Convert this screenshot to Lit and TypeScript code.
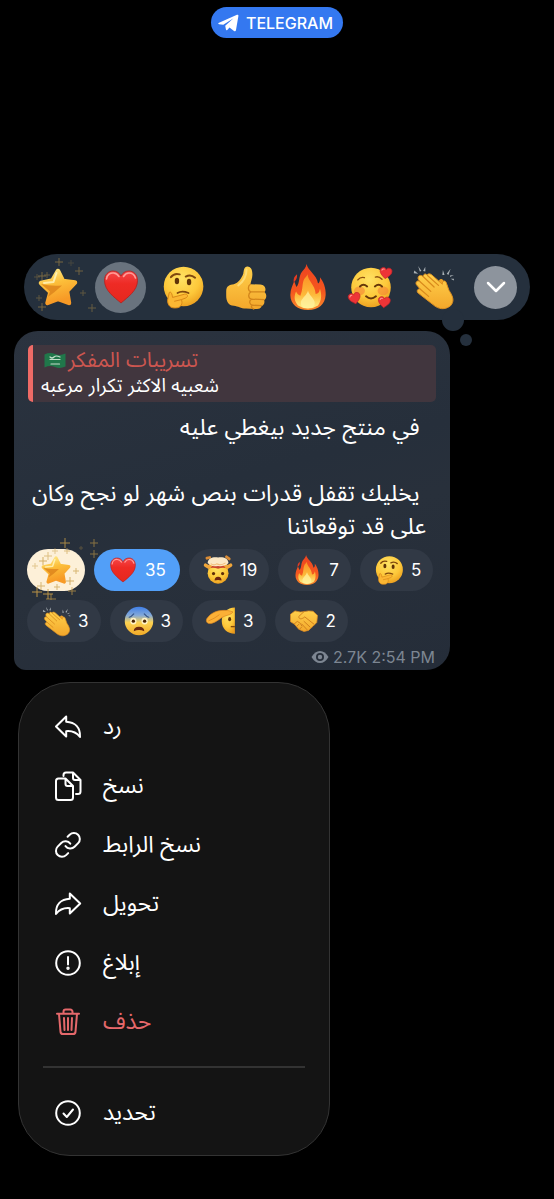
import { LitElement, html, svg, css, nothing } from "lit";
import type { TemplateResult } from "lit";
import { customElement } from "lit/decorators.js";

type Art = TemplateResult;

/* Shared gradients used by all the reaction drawings. */
const gradients = svg`
  <defs>
    <radialGradient id="face" cx="45%" cy="30%" r="75%">
      <stop offset="0" stop-color="#ffe263" /><stop offset="0.6" stop-color="#fdc83a" /><stop offset="1" stop-color="#ea9a1c" />
    </radialGradient>
    <linearGradient id="skin" x1="0" y1="0" x2="0" y2="1">
      <stop offset="0" stop-color="#ffd04b" /><stop offset="1" stop-color="#f3a72b" />
    </linearGradient>
    <linearGradient id="star" x1="0" y1="0" x2="0.3" y2="1">
      <stop offset="0" stop-color="#ffec8c" /><stop offset="0.45" stop-color="#fcbf3a" /><stop offset="1" stop-color="#f79a26" />
    </linearGradient>
    <linearGradient id="heart" x1="0" y1="0" x2="0" y2="1">
      <stop offset="0" stop-color="#f5474a" /><stop offset="0.4" stop-color="#ee2b25" /><stop offset="1" stop-color="#e5281d" />
    </linearGradient>
    <linearGradient id="flame" x1="0" y1="0" x2="0" y2="1">
      <stop offset="0" stop-color="#ee4320" /><stop offset="0.6" stop-color="#f4571f" /><stop offset="1" stop-color="#f98a2b" />
    </linearGradient>
    <linearGradient id="ember" x1="0" y1="0" x2="0" y2="1">
      <stop offset="0" stop-color="#fb9124" /><stop offset="0.6" stop-color="#fdb93a" /><stop offset="1" stop-color="#fff08a" />
    </linearGradient>
    <linearGradient id="fear" x1="0" y1="0" x2="0" y2="1">
      <stop offset="0" stop-color="#3f7fe8" /><stop offset="0.3" stop-color="#83a9d9" /><stop offset="0.55" stop-color="#fbd253" /><stop offset="1" stop-color="#f2aa27" />
    </linearGradient>
  </defs>`;

const star = svg`
  <path d="M20 4 L25 14 L37 15.500 L29 24 L31 36 L20 32 L9.500 36 L12.500 25 L3 16 L14.500 13.500 Z" fill="url(#star)" stroke="url(#star)" stroke-width="4.500" stroke-linejoin="round" />
  <path d="M3 17 Q13 19.500 24 18.500 Q17 25 10 30 L12 24.500 Z" fill="#dd851c" opacity="0.85" />
  <path d="M18.500 6 L15.500 15 L6 16" fill="none" stroke="#fff6c0" stroke-width="2" stroke-linecap="round" stroke-linejoin="round" opacity="0.8" />`;

const heart = svg`
  <path d="M20 36 C13 30 3.500 23.500 3.500 13.500 C3.500 7.500 7.500 4 12 4 C15.800 4 18.500 6 20 9 C21.500 6 24.200 4 28 4 C32.500 4 36.500 7.500 36.500 13.500 C36.500 23.500 27 30 20 36 Z" fill="url(#heart)" stroke="#b51f1c" stroke-width="0.800" />
  <path d="M5.500 12 C6 7.500 9.500 5.700 12.500 6 C15 6.200 17 8 18 9.500" fill="none" stroke="#ff9d98" stroke-width="1.600" stroke-linecap="round" />
  <path d="M22.500 9.500 C24 7 26 6 28 6 C31 6 33.500 8 34.500 11" fill="none" stroke="#ff9d98" stroke-width="1.600" stroke-linecap="round" />`;

const thinking = svg`
  <circle cx="20.500" cy="19.500" r="18" fill="url(#face)" />
  <ellipse cx="14.500" cy="14.500" rx="2" ry="3" fill="#5f3208" /><ellipse cx="25.500" cy="15.500" rx="2" ry="3" fill="#5f3208" />
  <path d="M9 11 Q12 7 17 8.500 M22.500 10.500 Q27 8 31 11.500" fill="none" stroke="#80480e" stroke-width="1.800" stroke-linecap="round" />
  <path d="M15 25.500 Q19 23 25 25.500" fill="none" stroke="#80480e" stroke-width="1.600" stroke-linecap="round" />
  <path d="M7.500 25 C9 24 10 25.500 10.500 29.500 L21.500 26.500 C24.500 26 25 29 22.500 30 L18.500 31.500 C20 34.500 18.500 39 13.500 39 C8.500 39.500 6 36.500 6 32 Z" fill="#fbb733" stroke="#d98818" stroke-width="0.900" stroke-linejoin="round" />
  <path d="M12 33 L18.500 31.500" stroke="#d98818" stroke-width="0.900" />`;

const thumb = svg`
  <path d="M2 24 C2 19 5 18 9 17.500 C13 16.500 16 12 17.500 8 C18 5.500 18 2 20.500 1.500 C24 1 26 4 25.800 9 C25.700 12 24.500 14.500 24 17.500 L33 17.800 C37.500 18 38.800 22.500 36.800 24.500 C39.500 27 38.500 31 36.500 32 C37.500 35 35.500 37 34 37.500 C33.500 40 31 40 28 40 L20 39.500 C15 39.500 13 37.500 9 37 C4 37 2 33 2 28 Z" fill="url(#skin)" />
  <path d="M24 17.500 C21.500 19 21.500 23.500 24.500 24.500 C21.500 26 22 30.500 25 31 C22.500 32.500 23 36 26 36.500 C24 37.500 25 39.500 27 40 M24.500 24.500 L36.800 24.500 M25 31 L36.500 31.500 M26 36.500 L34 37" fill="none" stroke="#d2851b" stroke-width="1.200" stroke-linecap="round" />
  <path d="M20.500 4 C20.500 10 17.500 15 13 18.500" fill="none" stroke="#ffe283" stroke-width="1.800" stroke-linecap="round" opacity="0.8" />`;

const fire = svg`
  <g transform="translate(3.400 0) scale(0.830 1)">
  <path d="M18.500 0 C20 6 29 9 30.500 17 C32 16.500 33 14 32.500 11.500 C36 15 39 21 38.500 27 C38 35 31 40 20 40 C9 40 1.500 35 1.500 27 C1.500 22 4 18.500 5.500 15 C6.500 17 7 18.500 8 20 C11.500 17 10 11 13.500 7 C16 4.500 18 3 18.500 0 Z" fill="url(#flame)" />
  <path d="M8.500 9 C5.500 11 4.500 13 5 16 C7 14.500 9 12.500 8.500 9 Z" fill="#e93a20" />
  <path d="M19.500 9 C20 15 27.500 18 28 26 C31 26 32 24 32.500 21.500 C34.500 26 34.500 32 30.500 36 Q20 41.500 9.500 36 C5 32 5.500 27.500 7.500 24 C8.500 26 10 27 12 27.500 C15 22 13.500 17 16 13 C17.500 11.500 19 10.500 19.500 9 Z" fill="url(#ember)" />
  <path d="M20 23 C21 27 25.500 29 27 33 Q28 38 20 38.500 Q12 38.500 12.500 33 C14 29 19 27 20 23 Z" fill="#fff3a0" opacity="0.75" />
  </g>`;

const miniHeart = (x: number, y: number, turn: number) => svg`
  <g transform="translate(${x} ${y}) rotate(${turn}) scale(0.300)">
    <path d="M0 18 C-7 12 -18 5 -18 -5 C-18 -12 -13 -15 -8 -15 C-4 -15 -1 -13 0 -9 C1 -13 4 -15 8 -15 C13 -15 18 -12 18 -5 C18 5 7 12 0 18 Z" fill="#ee3437" stroke="#c2222a" stroke-width="2" />
    <path d="M-13 -6 Q-11 -11 -6 -10" fill="none" stroke="#ff9b95" stroke-width="3" stroke-linecap="round" />
  </g>`;

const adoring = svg`
  <circle cx="20" cy="20.500" r="18" fill="url(#face)" />
  <ellipse cx="9.500" cy="23.500" rx="5" ry="4" fill="#f47d35" opacity="0.55" /><ellipse cx="31" cy="23.500" rx="5" ry="4" fill="#f47d35" opacity="0.55" />
  <path d="M10 19.500 Q13 16.500 16.500 19.500 M23.500 19.500 Q27 16.500 30 19.500" fill="none" stroke="#66380a" stroke-width="1.800" stroke-linecap="round" />
  <path d="M8 13.500 Q10.500 10.500 14 11.500 M24 11 Q27 10 30 13" fill="none" stroke="#8d5010" stroke-width="1.300" stroke-linecap="round" />
  <path d="M15.500 28.500 Q20 32.500 24.500 28.500" fill="none" stroke="#66380a" stroke-width="1.800" stroke-linecap="round" />
  ${miniHeart(33.5, 7, 8)}${miniHeart(5, 30, -14)}${miniHeart(32, 33.5, 6)}`;

const clap = svg`
  <path d="M25 16.500 C25 12 28 12 29.500 14 L31.500 22 Z" fill="#eda127" />
  <path d="M14.500 9 C16.500 7 18.500 8.500 20 10 L28.500 17.500 C28 14.500 31 13.500 32 16 L34.500 23 C38.500 29 39.500 33 36 37 C31 41 25 40.500 20 36 L6.500 25.500 C4.500 23.500 6.500 21 8.500 22 L5 18 C3.500 15.500 6 13.500 8 15 L6.500 12.500 C6 9.500 9 8.500 11 10.500 C11.500 8 13 7.500 14.500 9 Z" fill="url(#skin)" stroke="#dc8f20" stroke-width="0.900" stroke-linejoin="round" />
  <path d="M8 15 L18 24 M8.500 22 L16 28.500 M11 10.500 L21 20 M15 9.500 L25 18.500" fill="none" stroke="#d98a1c" stroke-width="1.100" stroke-linecap="round" />
  <path d="M3 5 L6.500 8 L2.500 7.500 Z M6.500 1 L9.500 5.500 L8 6 Z M13 1.500 L13 6 L11 5.500 Z M29 4.500 L30.500 9 L28.500 9 Z M36 3.500 L34 9 L32.500 8 Z M39 9 L35.500 11 L35.500 9.500 Z M39 14 L36 12.500 L39 12.500 Z" fill="#a9b0b5" />`;

const exploding = svg`
  <g transform="translate(1.500 1.500) scale(0.930)">
  <circle cx="20" cy="24.500" r="15" fill="url(#face)" />
  <path d="M6 18 Q10 12 20 12.500 Q30 12 34 18 Q27 15.500 20 18 Q12 15.500 6 18 Z" fill="#c9452d" />
  <path d="M2 13 L7 16 L10 12 M38 13 L33 16 L30 12" fill="none" stroke="#f0a63a" stroke-width="5" stroke-linejoin="round" stroke-linecap="round" />
  <path d="M4 3 L8 2 M32 1 L36 4" fill="none" stroke="#d98b35" stroke-width="4" stroke-linecap="round" />
  <path d="M5 10 C6 3 12 1 20 2 C28 1 34 3 35 10 C31 14 26 15 20 14 C13 15.500 9 14 5 10 Z" fill="#fbe7c4" />
  <path d="M10 11 Q14 14 18 11 Q23 14 30 10" fill="none" stroke="#f0bd78" stroke-width="1.500" stroke-linecap="round" />
  <circle cx="13.500" cy="25" r="2.300" fill="#5f2b08" /><circle cx="26.500" cy="25" r="2.300" fill="#5f2b08" />
  <path d="M15 35 Q15 29.500 20 29.500 Q25 29.500 25 35 Q20 33.500 15 35 Z" fill="#6d2410" />
  </g>`;

const fearful = svg`
  <circle cx="20" cy="20" r="19" fill="url(#fear)" />
  <path d="M7 15 Q10 14 13 10.500 M27 10.500 Q30 14 33 15" fill="none" stroke="#34548a" stroke-width="1.600" stroke-linecap="round" />
  <ellipse cx="12.500" cy="20" rx="4.200" ry="4.500" fill="#fff3c8" /><ellipse cx="27.500" cy="20" rx="4.200" ry="4.500" fill="#fff3c8" />
  <circle cx="12.500" cy="20.200" r="2.200" fill="#4c2606" /><circle cx="27.500" cy="20.200" r="2.200" fill="#4c2606" />
  <path d="M13 33.500 Q13 27.500 20 27.500 Q27 27.500 27 33.500 Q20 30.500 13 33.500 Z" fill="#6d2a10" />`;

const salute = svg`
  <path d="M38.500 2 C28 2 21 10 21 20 C21 30 28 37 38.500 37 Z" fill="url(#face)" />
  <path d="M1 17 C6 10 12 7 20 6 C27 5.500 32 6 36 8 C33 12 29 12 25 13.500 C20 15 15 21 8 23 C3 24.500 -1 22 1 17 Z" fill="#fbb036" stroke="#d98420" stroke-width="0.900" />
  <path d="M3 20 Q11 17 18 11.500" fill="none" stroke="#d98420" stroke-width="1" />
  <ellipse cx="31.500" cy="17.500" rx="2" ry="2.800" fill="#5f3208" />
  <path d="M33 27.500 H38.500" stroke="#80480e" stroke-width="1.800" />`;

const handshake = svg`
  <path d="M2 11 L8 6.500 L15 8 L20 7.500 L26 6.500 L32 7 L38 12.500 L37 22 L32 27 L26 32.500 L20 34 L13 31 L7 24 L2 21 Z" fill="url(#skin)" stroke="#d98a24" stroke-width="1" stroke-linejoin="round" />
  <path d="M20 7.500 L13 14 C13 18 17 18 21 14.500 L33 24 M28 28 L20 20.500 M24 31.500 L17 24 M7 24 L11 20.500 L15 23 L17 26.500 M10 27.500 L13 24.500 M14 31 L17 28" fill="none" stroke="#cf7f1e" stroke-width="1.300" stroke-linecap="round" stroke-linejoin="round" />`;

const sparkle = (x: number, y: number, r: number, o: number) => svg`
  <path d="M${x - r} ${y}H${x + r}M${x} ${y - r}V${y + r}" stroke="#c99e48" stroke-width="1" opacity=${o} />`;

const barSparkles = [
  [34, 5, 4, 0.5], [17, 19, 4, 0.5], [22, 18, 3, 0.4], [54, 14, 4, 0.45], [12, 20, 3, 0.3],
  [17, 50, 4, 0.5], [14, 41, 3, 0.35], [58, 36, 3, 0.35], [67, 51, 4, 0.4], [46, 6, 3, 0.2],
];
const chipSparkles = [
  [38, 4, 5, 0.8], [67, 4, 4, 0.6], [67, 15, 4, 0.6], [16, 22, 4, 0.8], [21, 17, 4, 0.6],
  [28, 12, 3, 0.5], [10, 53, 5, 0.9], [21, 55, 5, 0.9], [24, 60, 5, 0.7], [39, 67, 5, 0.5],
  [45, 52, 4, 0.7], [43, 42, 4, 0.8], [49, 32, 3, 0.7], [8, 27, 3, 0.5], [14, 47, 4, 0.7],
  [40, 12, 3, 0.6], [54, 9, 2, 0.3], [30, 48, 3, 0.7],
];

const emoji = (art: Art) => html`<svg class="emoji" viewBox="0 0 40 40" aria-hidden="true">${art}</svg>`;

const quick: { label: string; art: Art; kind?: string; stars?: boolean }[] = [
  { label: "نجمة", art: star, kind: "small", stars: true },
  { label: "قلب", art: heart, kind: "small on" },
  { label: "تفكير", art: thinking },
  { label: "إعجاب", art: thumb },
  { label: "نار", art: fire, kind: "large" },
  { label: "حب", art: adoring },
  { label: "تصفيق", art: clap },
];

const chips: { label: string; art: Art; count?: number; kind?: string }[] = [
  { label: "نجمة", art: star, kind: "paid" },
  { label: "قلب", art: heart, count: 35, kind: "mine" },
  { label: "ذهول", art: exploding, count: 19 },
  { label: "نار", art: fire, count: 7 },
  { label: "تفكير", art: thinking, count: 5 },
  { label: "تصفيق", art: clap, count: 3 },
  { label: "خوف", art: fearful, count: 3 },
  { label: "تحية", art: salute, count: 3 },
  { label: "مصافحة", art: handshake, count: 2 },
];

const menu: { text: string; art: Art; danger?: boolean }[] = [
  { text: "رد", art: svg`<path d="M12.200 3.500 L2 13.500 L12.200 23.500 V18.200 C18.500 17.600 22.500 19.500 26 24 C26.500 14.500 21 9.200 12.200 8.700 Z" />` },
  {
    text: "نسخ",
    art: svg`<path d="M4.500 6.500 H11.500 L19 14 V25.500 A2.500 2.500 0 0 1 16.500 28 H4.500 A2.500 2.500 0 0 1 2 25.500 V9 A2.500 2.500 0 0 1 4.500 6.500 Z M11.500 6.500 V12 A2 2 0 0 0 13.500 14 H19 M9.500 4 V3 A2.500 2.500 0 0 1 12 0.500 H19 L26.500 8 V19.500 A2.500 2.500 0 0 1 24 22 H22 M19 0.500 V6 A2 2 0 0 0 21 8 H26.500" />`,
  },
  {
    text: "نسخ الرابط",
    art: svg`<g transform="translate(-0.500 -0.500) scale(1.200)" stroke-width="1.670"><path d="M10 13a5 5 0 0 0 7.540 .54l3-3a5 5 0 0 0-7.070-7.070l-1.720 1.710 M14 11a5 5 0 0 0-7.540-.54l-3 3a5 5 0 0 0 7.070 7.070l1.710-1.710" /></g>`,
  },
  { text: "تحويل", art: svg`<path d="M15.800 3.500 L26.200 13.500 L15.800 23.500 V18.200 C9.500 17.600 5.500 19.500 2 24 C1.500 14.500 7 9.200 15.800 8.700 Z" />` },
  { text: "إبلاغ", art: svg`<circle cx="14" cy="14" r="11.800" /><path d="M14 8 V15.500" /><circle cx="14" cy="19.200" r="0.700" fill="currentColor" />` },
  {
    text: "حذف",
    danger: true,
    art: svg`<path d="M3 5.800 H25 M9.500 5.500 V3.800 A2.200 2.200 0 0 1 11.700 1.600 H16.300 A2.200 2.200 0 0 1 18.500 3.800 V5.500 M5 6 L6.500 23.600 A2.500 2.500 0 0 0 9 26 H19 A2.500 2.500 0 0 0 21.500 23.600 L23 6 M10 10 L10.500 22 M14 10 V22 M18 10 L17.500 22" />`,
  },
];

const item = (text: string, art: Art, danger = false) => html`
  <button class="item ${danger ? "danger" : ""}">
    <svg class="glyph" viewBox="0 0 28 28" aria-hidden="true">${art}</svg>
    <span>${text}</span>
  </button>`;

@customElement("app-root")
export class AppRoot extends LitElement {
  static styles = css`
    :host {
      display: block;
      min-height: 100vh;
      box-sizing: border-box;
      padding: 7px 14px 43px;
      background: #000;
      color: #fff;
      font-family: Inter, "Noto Sans", "Noto Sans Arabic", "DejaVu Sans", sans-serif;
    }
    button { font: inherit; color: inherit; border: 0; margin: 0; padding: 0; background: none; cursor: pointer; }
    svg { display: block; overflow: visible; flex: none; }
    .defs { position: absolute; }
    .brand {
      display: flex; align-items: center; gap: 7px;
      width: fit-content; height: 31px; margin: 0 auto; padding: 0 10px 0 7px;
      border-radius: 16px; background: #3478f0; color: #fff; text-decoration: none;
      font-size: 16px; font-weight: 500;
    }
    .quick {
      position: relative;
      display: grid; grid-template-columns: repeat(8, 1fr); align-items: center; justify-items: center;
      height: 66px; margin: 216px 10px 0; padding: 0 3px;
      border-radius: 33px; background: #25303d;
    }
    .quick::before, .quick::after { content: ""; position: absolute; border-radius: 50%; background: #25303d; }
    .quick::before { width: 22px; height: 22px; right: 66px; bottom: -11px; }
    .quick::after { width: 12px; height: 12px; right: 58px; bottom: -26px; }
    .react { position: relative; z-index: 1; display: grid; place-items: center; width: 51px; height: 51px; border-radius: 50%; }
    .react .emoji { width: 44px; height: 44px; }
    .react.small .emoji { width: 40px; height: 40px; }
    .react.large .emoji { width: 46px; height: 46px; }
    .react.on { background: #69737e; }
    .more { display: grid; place-items: center; width: 43px; height: 43px; border-radius: 50%; background: #8d949d; }
    .sparks { position: absolute; inset: 0; width: 100%; height: 100%; pointer-events: none; }
    .bubble {
      width: fit-content; max-width: 436px; box-sizing: border-box; margin-top: 11px; padding: 14px 14px 3px 13px;
      border-radius: 24px 24px 24px 12px;
      background: linear-gradient(165deg, #2b333f 0%, #262f3b 45%, #28303b 60%, #252d39 100%);
    }
    .quote {
      display: flex; flex-direction: column; align-items: flex-start;
      margin-left: 1px; padding: 2px 8px 3px; height: 52px;
      border-left: 5px solid #ee6b66; border-radius: 5px; background: #41363e;
      font-size: 19px; line-height: 26px; white-space: nowrap; color: #fff; text-decoration: none;
    }
    .name { display: flex; flex-direction: row-reverse; align-items: center; gap: 2px; padding-left: 3px; font-size: 21px; color: #cd5650; }
    .body { margin: 9px 10px 0 4px; font-size: 23px; line-height: 33px; text-align: right; white-space: pre; }
    .chips { display: flex; flex-wrap: wrap; gap: 9px; margin-top: 6px; }
    .chip {
      position: relative; display: flex; align-items: center; gap: 7px;
      height: 42px; padding: 0 12px 0 14px; border-radius: 21px;
      background: #313945; font-size: 17px;
    }
    .chip .emoji { width: 30px; height: 30px; }
    .chip.mine { background: #529ff8; padding-right: 14px; }
    .chip.paid { background: #fdf0d8; padding: 0 14px; }
    .meta { display: flex; align-items: center; justify-content: flex-end; gap: 4px; margin-top: 5px; padding-right: 1px; font-size: 16px; line-height: 20px; color: #7d8692; }
    .menu {
      box-sizing: border-box; width: 312px; max-width: 100%; margin: 12px 0 0 4px; padding: 14px 24px 13px;
      border: 1px solid #333; border-radius: 52px; background: #141414;
    }
    .item { display: flex; align-items: center; gap: 21px; width: 100%; height: 59px; padding-left: 11px; font-size: 23px; text-align: left; }
    .glyph { width: 28px; height: 28px; fill: none; stroke: currentColor; stroke-width: 2; stroke-linecap: round; stroke-linejoin: round; }
    .danger { color: #e5686b; }
    .rule { height: 2px; margin: 15px 0; border: 0; background: #333; }
  `;

  render() {
    return html`
      <svg class="defs" width="0" height="0" aria-hidden="true">${gradients}</svg>
      <a class="brand" href="#">
        <svg width="21" height="18" viewBox="0 0 21 18" aria-hidden="true">
          <path d="M0.500 9 L19 0.800 Q20.600 0.300 20.400 2 L18 16 Q17.600 18 16 16.900 L11.500 13.500 L9.300 16 Q8.200 16.800 7.900 15.300 L7.200 11.800 L15.500 4.200 L5.300 10.700 L1 10.200 Q-0.300 9.700 0.500 9 Z" fill="#fff" />
        </svg>
        <span>TELEGRAM</span>
      </a>

      <div class="quick" role="toolbar">
        ${quick.map((q) => html`
          <button class="react ${q.kind ?? ""}" aria-label=${q.label}>
            ${emoji(q.art)}
            ${q.stars ? html`<svg class="sparks" viewBox="8 -1 51 51" aria-hidden="true">${barSparkles.map(([x, y, r, o]) => sparkle(x, y - 6, r, o))}</svg>` : nothing}
          </button>`)}
        <button class="more" aria-label="المزيد">
          <svg width="20" height="12" viewBox="0 0 20 12" aria-hidden="true"><path d="M2 2 L10 10 L18 2" fill="none" stroke="#fff" stroke-width="2.500" stroke-linecap="round" stroke-linejoin="round" /></svg>
        </button>
      </div>

      <article class="bubble">
        <a class="quote" href="#">
          <span class="name" dir="ltr">
            <span>تسريبات المفكر</span>
            <svg width="22" height="17" viewBox="0 0 22 17" aria-hidden="true">
              <path d="M0.500 2.500 Q6 0 11 2 T21.500 1.500 V14.500 Q16 17 11 15 T0.500 15.500 Z" fill="#20774a" />
              <path d="M6 5 Q8 7 10 5 T16 5 M6 7.500 H16 M7 12 H15.500" fill="none" stroke="#c4ddca" stroke-width="1.200" stroke-linecap="round" />
            </svg>
          </span>
          <span dir="rtl">شعبيه الاكثر تكرار مرعبه</span>
        </a>
        <div class="body" dir="rtl">&nbsp;في منتج جديد بيغطي عليه

&nbsp;يخليك تقفل قدرات بنص شهر لو نجح وكان
على قد توقعاتنا</div>
        <div class="chips">
          ${chips.map((c) => html`
            <button class="chip ${c.kind ?? ""}" aria-label=${c.label}>
              ${emoji(c.art)}
              ${c.count ? html`<span>${c.count}</span>` : nothing}
              ${c.kind === "paid" ? html`<svg class="sparks" viewBox="0 10 58 42" aria-hidden="true">${chipSparkles.map(([x, y, r, o]) => sparkle(x, y, r, o))}</svg>` : nothing}
            </button>`)}
        </div>
        <div class="meta">
          <svg width="18" height="12" viewBox="0 0 18 12" aria-hidden="true">
            <path d="M0.500 6 Q4 0 9 0 T17.500 6 Q14 12 9 12 T0.500 6 Z" fill="#7d8692" />
            <circle cx="9" cy="6" r="4" fill="#262e3a" /><circle cx="9" cy="6" r="2.200" fill="#7d8692" />
          </svg>
          <span>2.7K 2:54 PM</span>
        </div>
      </article>

      <nav class="menu">
        ${menu.map((m) => item(m.text, m.art, m.danger))}
        <hr class="rule" />
        ${item("تحديد", svg`<circle cx="14" cy="14" r="11.800" /><path d="M9.500 14.500 L12.800 18 L19 10.500" />`)}
      </nav>
    `;
  }
}
